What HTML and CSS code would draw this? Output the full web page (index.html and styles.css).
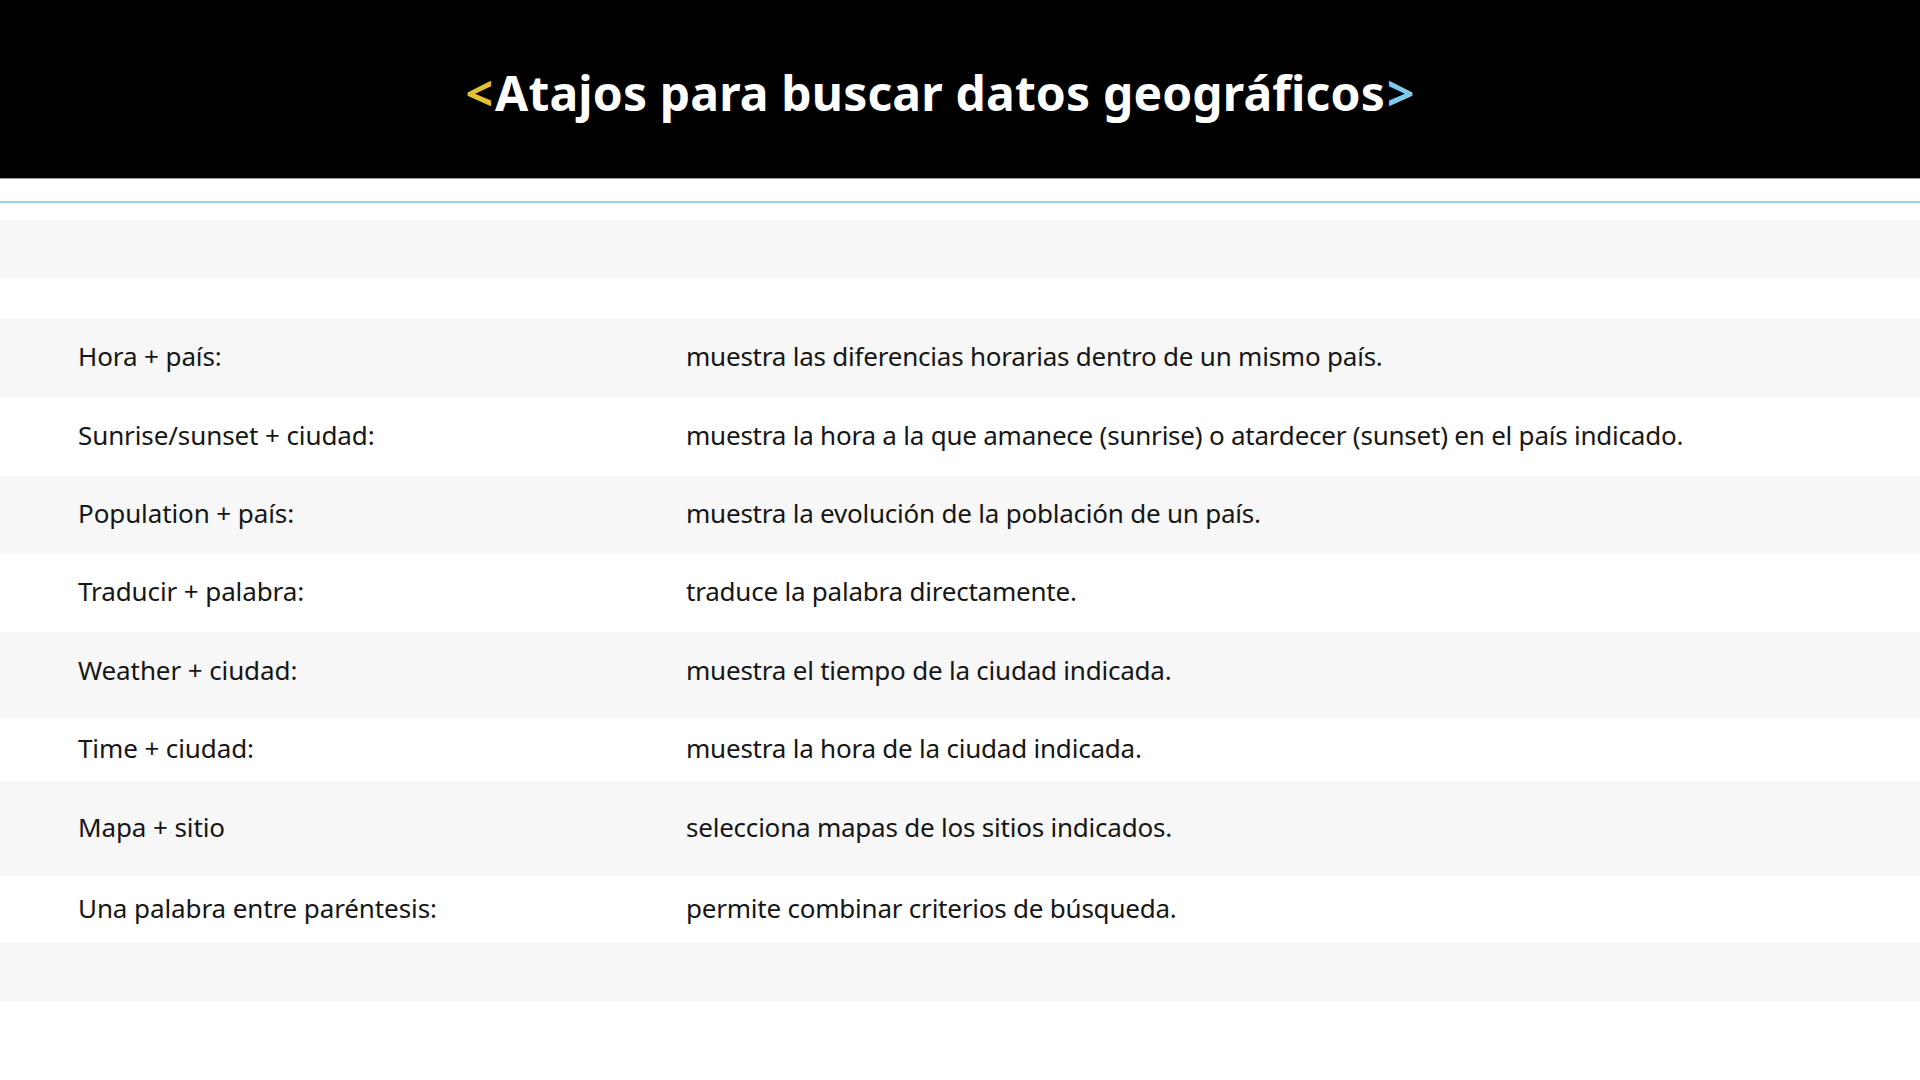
FILE: index.html
```
<html>
    <head>
        <meta charset="UTF-8" name="viewport" content="width=device-width, initial-scale=1.0">
        <link rel="stylesheet" href="styles.css">
    </head>
    <body>
        <header class="cabecera">
            <h1 class="titulo"><span class="menor">&lt;</span>Atajos para buscar datos geográficos<span class="mayor">&gt;</span></h1>
        </header>
        <div class="linea"></div>

        <div class="tabla">
            <div class="fila gris vacia"></div>
            <div class="hueco"></div>
            <div class="fila gris alto-78"><p class="atajo">Hora + país:</p><p class="desc">muestra las diferencias horarias dentro de un mismo país.</p></div>
            <div class="fila alto-79"><p class="atajo">Sunrise/sunset + ciudad:</p><p class="desc">muestra la hora a la que amanece (sunrise) o atardecer (sunset) en el país indicado.</p></div>
            <div class="fila gris alto-78"><p class="atajo">Population + país:</p><p class="desc">muestra la evolución de la población de un país.</p></div>
            <div class="fila alto-78"><p class="atajo">Traducir + palabra:</p><p class="desc">traduce la palabra directamente.</p></div>
            <div class="fila gris alto-86 arriba"><p class="atajo">Weather + ciudad:</p><p class="desc">muestra el tiempo de la ciudad indicada.</p></div>
            <div class="fila alto-63"><p class="atajo">Time + ciudad:</p><p class="desc">muestra la hora de la ciudad indicada.</p></div>
            <div class="fila gris alto-95"><p class="atajo">Mapa + sitio</p><p class="desc">selecciona mapas de los sitios indicados.</p></div>
            <div class="fila alto-67"><p class="atajo">Una palabra entre paréntesis:</p><p class="desc">permite combinar criterios de búsqueda.</p></div>
            <div class="fila gris vacia"></div>
        </div>
    </body>
</html>
```

FILE: styles.css
```
html, body {
    margin: 0;
    padding: 0;
    background: white;
    font-family: "Noto Sans", "Open Sans", sans-serif;
    color: #161616;
}

.cabecera {
    background: black;
    height: 178px;
    border-bottom: 1px solid #9a9a9a;
    display: flex;
    align-items: center;
    justify-content: center;
    padding-right: 40px;
}

.titulo {
    margin: 0;
    color: white;
    font-size: 48px;
    font-weight: bold;
    letter-spacing: 0.15px;
    margin-top: 6px;
}

.menor {
    color: #e2c234;
    margin-right: 2px;
}

.mayor {
    color: #7fcbee;
    margin-left: 2px;
}

.linea {
    height: 2px;
    margin-top: 22px;
    background: #92d4ef;
}

.tabla {
    margin-top: 17px;
}

.hueco {
    height: 41px;
}

.fila {
    display: grid;
    grid-template-columns: 608px 1fr;
    align-items: center;
    padding-left: 78px;
}

.fila p {
    margin: 0;
    font-size: 26px;
    line-height: 32px;
    margin-top: -4px;
    letter-spacing: -0.1px;
}

.fila .desc {
    letter-spacing: -0.22px;
}

/* el texto de esta fila va un poco más arriba */
.arriba p {
    margin-top: -10px;
}

.gris {
    background: #f7f7f7;
}

.vacia { height: 58px; }
.alto-63 { height: 63px; }
.alto-67 { height: 67px; }
.alto-78 { height: 78px; }
.alto-79 { height: 79px; }
.alto-86 { height: 86px; }
.alto-95 { height: 95px; }
```
